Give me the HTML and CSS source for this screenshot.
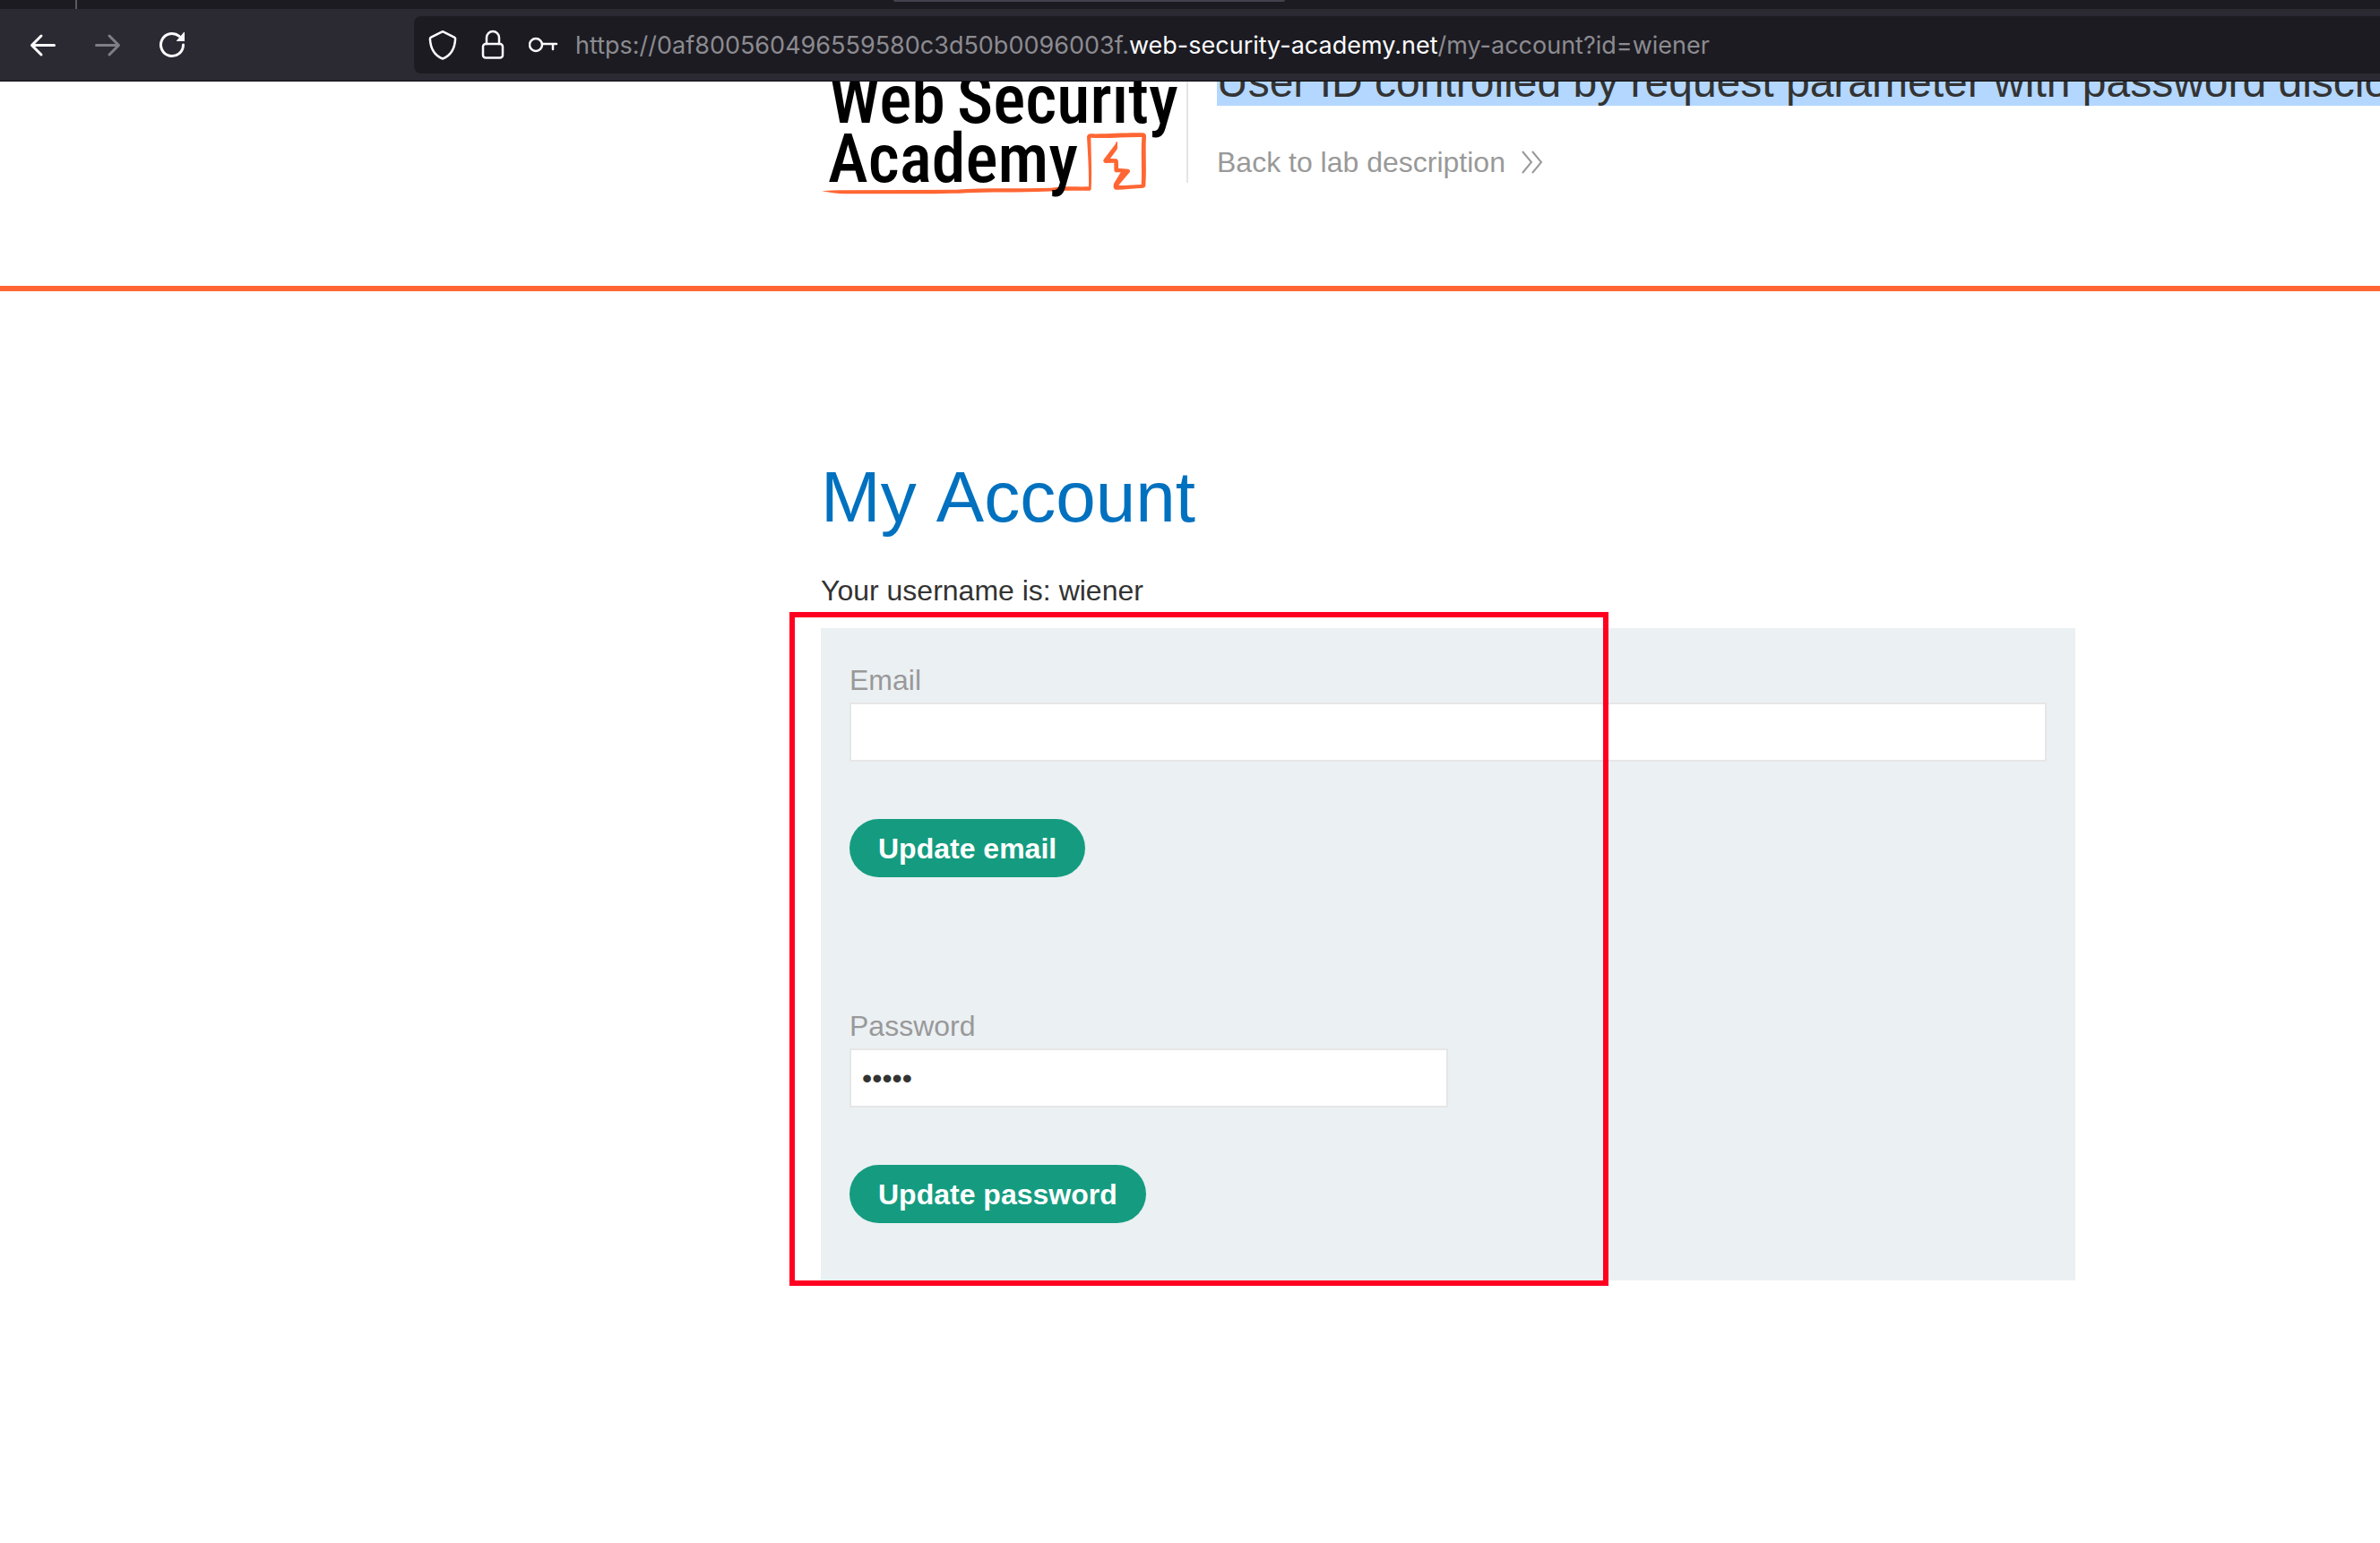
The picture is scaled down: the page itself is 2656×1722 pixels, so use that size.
FILE: index.html
```html
<!DOCTYPE html>
<html lang="en">
<head>
<meta charset="utf-8">
<title>My Account</title>
<link rel="stylesheet" href="styles.css">
</head>
<body>
<div class="browser">
  <div class="tabstrip"><span class="tab-separator"></span><span class="tab-active"></span></div>
  <div class="toolbar">
    <button class="tool" aria-label="Back"><svg width="32" height="32" viewBox="0 0 32 32"><path d="M28.500 16.500H4M14 6L3.500 16.500 14 27"/></svg></button>
    <button class="tool tool-off" aria-label="Forward" disabled><svg width="32" height="32" viewBox="0 0 32 32"><path d="M3.500 16.500H28M18 6l10.500 10.500L18 27"/></svg></button>
    <button class="tool" aria-label="Reload"><svg width="32" height="32" viewBox="0 0 32 32"><path d="M28.500 16A12.500 12.500 0 1 1 24 6.400"/><path class="solid" d="M30 2.500v9.500h-8.500q-1 0-.4-.8l7.900-9q1-.9 1 .3z"/></svg></button>
    <div class="address">
      <svg class="badge" width="32" height="36" viewBox="0 0 32 36"><path d="M16 3.200L29 9.600q1.200.6 1.100 2C29.500 22 25 30 16 33.500 7 30 2.500 22 1.900 11.600q-.1-1.400 1.100-2z"/></svg>
      <svg class="badge" width="28" height="36" viewBox="0 0 28 36"><path d="M7 17V10a7 7 0 0 1 14 0v7"/><rect x="3" y="17" width="22" height="15.500" rx="3"/></svg>
      <svg class="badge" width="36" height="36" viewBox="0 0 36 36"><circle cx="8" cy="18" r="7"/><path d="M15 17h16M27 17v6"/></svg>
      <div class="url">https://0af800560496559580c3d50b0096003f.<span class="domain">web-security-academy.net</span>/my-account?id=wiener</div>
    </div>
  </div>
</div>
<header class="lab-header">
  <div class="lab-banner">
    <a class="logo" href="#" aria-label="Web Security Academy">
      <svg width="408" height="156" viewBox="0 0 408 156">
        <g class="mark" transform="translate(-16 16) scale(.33333)">
          <path d="M52 400C75 397 100 397 130 397L500 395C600 388 700 392 820 389C860 383 900 386 945 385C946 330 942 270 939 218Q940 209 952 208C1010 209 1060 204 1125 205Q1138 206 1137 218C1134 270 1139 320 1135 382Q1133 390 1122 390C1090 391 1060 396 1036 395Q1027 393 1028 383Q1028 374 1034 367L1052 337H1034Q1030 336 1030 326V305L1000 306Q991 302 995 294L1034 243Q1038 228 1041 238V256Q1040 262 1034 268L1017 291L1038 292Q1044 294 1044 302V323L1078 326Q1086 330 1082 337L1045 380C1070 382 1095 379 1121 378C1124 330 1119 270 1123 219C1070 217 1010 225 952 221C953 280 956 340 953 394Q951 400 944 398L860 398C740 405 640 402 560 405C440 411 280 408 130 409C100 409 75 404 52 400Z"/>
        </g>
        <text class="wordmark" x="9" y="73">Web</text>
        <text class="wordmark" x="152" y="73">Security</text>
        <text class="wordmark" x="8" y="139">Academy</text>
      </svg>
    </a>
    <div class="lab-title">
      <h2><span>User ID controlled by request parameter with password disclosure</span></h2>
      <a class="back" href="#">Back to lab description<svg width="24" height="26" viewBox="0 0 24 26"><path d="M1 1l10 12L1 25M12 1l10 12-10 12"/></svg></a>
    </div>
  </div>
</header>
<main class="account">
  <h1>My Account</h1>
  <p class="username">Your username is: wiener</p>
  <div class="panel">
    <form>
      <label for="email">Email</label>
      <input id="email" type="email">
      <button type="button">Update email</button>
    </form>
    <form>
      <label for="password">Password</label>
      <input id="password" class="half" type="password" value="peter">
      <button type="button">Update password</button>
    </form>
    <div class="highlight"></div>
  </div>
</main>
</body>
</html>
```
FILE: styles.css
```css
* { box-sizing: border-box; }
body {
  margin: 0;
  background: #fff;
  color: #333332;
  font: 32px/36px "Liberation Sans", Arial, sans-serif;
  overflow-x: hidden;
}

/* browser chrome */
.browser { background: #2b2a33; border-bottom: 1px solid #0c0c0d; }
.tabstrip { position: relative; height: 10px; background: #1c1b22; }
.tab-separator { position: absolute; left: 84px; top: 0; width: 2px; height: 10px; background: #5b5a62; }
.tab-active { position: absolute; left: 997px; top: 0; width: 437px; height: 2px; background: #42414d; border-radius: 0 0 4px 4px; }
.toolbar { display: flex; align-items: center; height: 80px; padding-left: 32px; gap: 40px; }
.tool { display: flex; padding: 0; border: 0; background: none; color: #fbfbfe; }
.tool-off { color: #7f7e84; }
.tool svg, .badge { fill: none; stroke: currentColor; stroke-width: 3; stroke-linecap: round; stroke-linejoin: round; }
.badge { flex: none; stroke-width: 2.5; }
.tool .solid { fill: currentColor; stroke: none; }
.address {
  display: flex;
  align-items: center;
  flex: 1;
  height: 64px;
  margin-left: 214px;
  padding-left: 16px;
  border-radius: 8px 0 0 8px;
  background: #1c1b22;
  color: #fbfbfe;
  gap: 26px;
}
.url { margin-left: -10px; padding-top: 2px; color: #8c8b90; font: 27px/36px Inter, sans-serif; white-space: nowrap; }
.domain { color: #fbfbfe; }

/* lab banner */
.lab-header { overflow: hidden; border-bottom: 6px solid #ff6633; }
.lab-banner { display: flex; align-items: flex-start; margin-top: -27px; padding: 0 0 99px 916px; }
.logo { display: block; flex: none; }
.logo svg { display: block; }
.mark { fill: #ff6633; }
.wordmark { font: 500 76px "Roboto Condensed", "Liberation Sans Narrow", Roboto, sans-serif; fill: #000; }
.lab-title { flex: 1; min-width: 0; height: 140px; padding-left: 32px; border-left: 2px solid #e5e5e5; }
h2 { margin: 0 0 43px; font-size: 48px; line-height: 56px; font-weight: 400; white-space: nowrap; }
h2 span { background: #b3d7ff; }
.back { display: flex; align-items: center; gap: 18px; color: #999; text-decoration: none; }
.back svg { fill: none; stroke: #999; stroke-width: 2; }

/* account page */
.account { padding: 184px 340px 96px 916px; }
h1 { margin: 0 0 40px; color: #0071bf; font-size: 80px; line-height: 92px; font-weight: 400; font-kerning: none; }
.username { margin: 0 0 24px; }
.panel { position: relative; display: flex; flex-direction: column; gap: 148px; padding: 40px 32px 64px; background: #ebf0f3; }
form { display: flex; flex-direction: column; align-items: flex-start; }
label { margin-bottom: 7px; color: #999; }
input { width: 100%; height: 66px; margin: 0 0 64px; padding: 0 12px; border: 2px solid #e6e6e6; border-radius: 0; background: #fff; color: #333332; font: inherit; }
.half { width: 50%; }
form button { height: 65px; padding: 0 32px; border: 0; border-radius: 33px; background: #159c80; color: #fff; font: inherit; font-weight: 700; }
.highlight { position: absolute; left: -35px; top: -18px; bottom: -6px; width: 914px; border: 6px solid #ff0021; }
```
